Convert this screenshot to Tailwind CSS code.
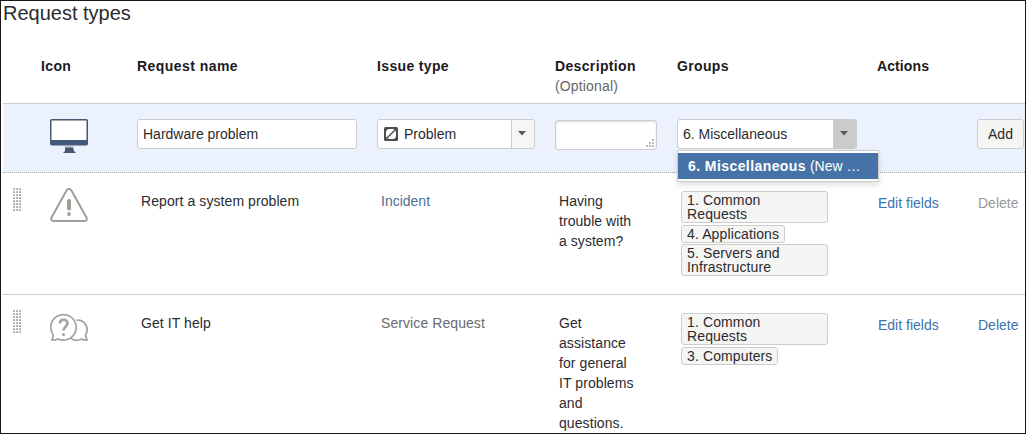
<!DOCTYPE html>
<html lang="en">
<head>
<meta charset="utf-8">
<title>Request types</title>
<script src="https://cdn.jsdelivr.net/npm/@tailwindcss/browser@4"></script>
</head>
<body class="bg-white">
<main class="h-[434px] w-[1026px] overflow-hidden border border-[#1a171b] bg-white pl-[2px] font-['Liberation_Sans',Arial,sans-serif] text-sm leading-5 text-[#2b2b2e]">
  <h1 class="h-[54px] text-xl leading-6"><span>Request types</span></h1>

  <div class="grid h-12 grid-cols-[134px_240px_178px_122px_200px_100px_48px] pt-px font-bold tracking-[0.35px] text-[#1c1a1f]">
    <div class="pl-[38px]">Icon</div>
    <div class="tracking-[0.45px]">Request name</div>
    <div>Issue type</div>
    <div>Description<br><span class="font-normal tracking-[0.15px] text-[#666]">(Optional)</span></div>
    <div>Groups</div>
    <div class="tracking-[0.1px]">Actions</div>
  </div>

  <div class="grid h-[70px] grid-cols-[134px_240px_178px_122px_200px_100px_48px] border-y border-t-[#ccc] border-b-[#aaa] bg-[#ebf1fd] pt-[15px] [border-bottom-style:dotted]">
    <div class="pl-[47px]">
      <svg class="block" width="39" height="35" viewBox="0 0 39 35">
        <rect x="0.75" y="0.75" width="36.5" height="25" rx="1" fill="#fff" stroke="#48566f" stroke-width="1.5"/>
        <path d="M1 21h36v5H1z" fill="#43597b"/>
        <path d="M15 28h8l1 4 2 2H13l2-2z" fill="#48566f"/>
        <path d="M14.500 27h9v1.500h-9z" fill="#c6ccd5"/>
      </svg>
    </div>
    <div><div class="flex h-[30px] w-[220px] items-center rounded-[3px] border border-[#ccc] bg-white pl-[5px]">Hardware problem</div></div>
    <div>
      <div class="flex h-[30px] w-[158px] items-center overflow-hidden rounded-[3px] border border-[#ccc] bg-white pl-[6px]">
        <svg width="14" height="14" viewBox="0 0 14 14"><rect width="14" height="14" rx="1.500" fill="#4f4a50"/><rect x="2" y="2" width="10" height="10" rx="3.500" fill="#fff"/><path d="M2.500 11.500 11.500 2.500" stroke="#4f4a50" stroke-width="1.500"/></svg>
        <span class="ml-[6px] grow">Problem</span>
        <span class="flex h-full w-[23px] items-center justify-center border-l border-[#ccc] bg-[#f6f6f5]"><svg class="mr-[2px] mb-[2px]" width="8" height="5" viewBox="0 0 8 5"><path d="M0 0h8L4 4.500z" fill="#5a565c"/></svg></span>
      </div>
    </div>
    <div>
      <div class="mt-px flex h-[30px] w-[102px] items-end justify-end rounded-[3px] border border-[#ccc] bg-white p-[2px] shadow-[inset_0_1px_2px_#ddd]">
        <svg width="8" height="8" viewBox="0 0 8 8" fill="#bbb"><path d="M6 0h2v2H6zM3 3h2v2H3zM6 3h2v2H6zM0 6h2v2H0zM3 6h2v2H3zM6 6h2v2H6z"/></svg>
      </div>
    </div>
    <div class="relative">
      <div class="flex h-[30px] w-[180px] items-center overflow-hidden rounded-[3px] border border-[#ccc] bg-white pl-[5px]">
        <span class="grow">6. Miscellaneous</span>
        <span class="flex h-full w-[23px] items-center justify-center bg-[#cbcbcb]"><svg class="mr-[2px] mb-[2px]" width="8" height="5" viewBox="0 0 8 5"><path d="M0 0h8L4 4.500z" fill="#5a565c"/></svg></span>
      </div>
      <div class="absolute top-[31px] left-0 z-10 w-[202px] border border-[#ccc] bg-white pt-[2px] pb-[2px] shadow-[0_3px_6px_rgba(0,0,0,0.13)]">
        <div class="h-[26px] bg-[#4572a7] pl-[10px] leading-[27px] whitespace-nowrap text-white"><b class="tracking-[0.42px]">6. Miscellaneous</b> (New …</div>
      </div>
    </div>
    <div></div>
    <div><div class="flex h-[30px] w-[47px] items-center justify-center rounded-[3px] border border-[#ccc] bg-[#f5f5f4]">Add</div></div>
  </div>

  <div class="grid h-[122px] grid-cols-[134px_240px_178px_122px_200px_100px_48px] border-b border-[#ccc] pt-[18px]">
    <div class="flex">
      <svg class="mt-[-3px] ml-[10px]" width="8" height="24" viewBox="0 0 8 24"><defs><pattern id="grip" width="3" height="3" patternUnits="userSpaceOnUse"><rect width="2" height="2" fill="#bdbdbd"/><rect x="1" y="1" width="1" height="1" fill="#999"/></pattern></defs><rect width="8" height="23" fill="url(#grip)"/></svg>
      <svg class="mt-[-3px] ml-[29px]" width="39" height="35" viewBox="0 0 39 35" fill="none" stroke="#9f9f98"><path d="M16.700 2.200Q19 -.5 21.300 2.200L36.500 29.500Q37.800 33 34.500 33H3.500Q.2 33 1.500 29.500Z" stroke-width="2" stroke-linejoin="round"/><path d="M19 13v7.500" stroke-width="4" stroke-linecap="round"/><circle cx="19" cy="26" r="1.900" fill="#9f9f98" stroke="none"/></svg>
    </div>
    <div class="pl-1 tracking-[0.08px]">Report a system problem</div>
    <div class="pl-1 text-[#4f6e96]">Incident</div>
    <div class="pl-1 tracking-[0.05px]">Having<br>trouble with<br>a system?</div>
    <div class="flex flex-col items-start pl-1 leading-[14px] tracking-[0.12px]">
      <span class="h-8 w-[147px] rounded-[3px] border border-[#ccc] bg-[#f5f5f4] px-[5px] pt-px">1. Common<br>Requests</span>
      <span class="mt-[2px] h-[18px] rounded-[3px] border border-[#ccc] bg-[#f5f5f4] px-[5px] pt-px">4. Applications</span>
      <span class="mt-px h-8 w-[147px] rounded-[3px] border border-[#ccc] bg-[#f5f5f4] px-[5px] pt-px">5. Servers and<br>Infrastructure</span>
    </div>
    <div class="pt-[2px] pl-px text-[#3b73af]">Edit fields</div>
    <div class="pt-[2px] pl-px text-[#999]">Delete</div>
  </div>

  <div class="grid grid-cols-[134px_240px_178px_122px_200px_100px_48px] pt-[18px]">
    <div class="flex items-start">
      <svg class="mt-[-3px] ml-[10px]" width="8" height="24" viewBox="0 0 8 24"><rect width="8" height="23" fill="url(#grip)"/></svg>
      <svg class="ml-[29px]" width="39" height="29" viewBox="0 0 39 29" fill="none" stroke="#a0a39e" stroke-width="1.700" stroke-linejoin="round"><path d="M3 21.500A12.700 12.700 0 1 1 18 26.200Q13 28.200 8 26Q5 27.500 1.800 27Q3.500 24.500 3 21.500Z"/><path d="M26.500 7.200C34.500 6.500 40 15 35.500 22Q35.500 25 37.200 27Q34 27.500 31.500 26Q26 28.800 21 25.500"/><path d="M9.800 10.500C10 5.500 17.500 5.700 17.500 10.300C17.500 13.500 13.600 13.500 13.600 17.500" stroke-width="2.600"/><circle cx="13.500" cy="21.500" r="1.500" fill="#a0a39e" stroke="none"/></svg>
    </div>
    <div class="pl-1 tracking-[0.08px]">Get IT help</div>
    <div class="pl-1 tracking-[0.08px] text-[#666a70]">Service Request</div>
    <div class="pl-1 tracking-[0.08px]">Get<br>assistance<br>for general<br>IT problems<br>and<br>questions.</div>
    <div class="flex flex-col items-start pl-1 leading-[14px] tracking-[0.12px]">
      <span class="h-8 w-[147px] rounded-[3px] border border-[#ccc] bg-[#f5f5f4] px-[5px] pt-px">1. Common<br>Requests</span>
      <span class="mt-[2px] h-[18px] rounded-[3px] border border-[#ccc] bg-[#f5f5f4] px-[5px] pt-px">3. Computers</span>
    </div>
    <div class="pt-[2px] pl-px text-[#3b73af]">Edit fields</div>
    <div class="pt-[2px] pl-px text-[#3b73af]">Delete</div>
  </div>
</main>
</body>
</html>
